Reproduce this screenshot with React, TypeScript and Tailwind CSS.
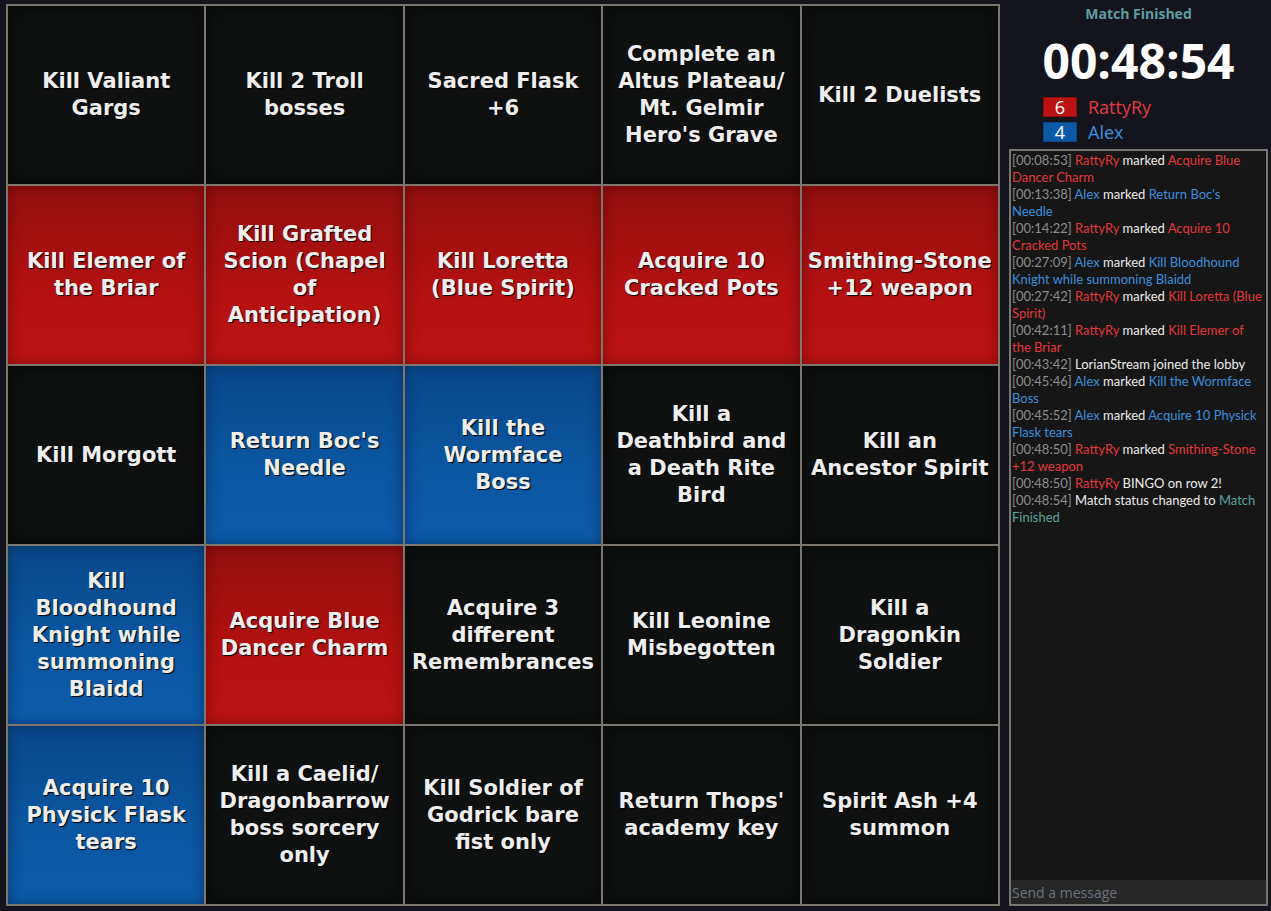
import React from "react";

type Color = "black" | "red" | "blue";
type Cell = { c: Color; t: string[] };

const cells: Cell[] = [
  { c: "black", t: ["Kill Valiant", "Gargs"] },
  { c: "black", t: ["Kill 2 Troll", "bosses"] },
  { c: "black", t: ["Sacred Flask", "+6"] },
  { c: "black", t: ["Complete an", "Altus Plateau/", "Mt. Gelmir", "Hero's Grave"] },
  { c: "black", t: ["Kill 2 Duelists"] },
  { c: "red", t: ["Kill Elemer of", "the Briar"] },
  { c: "red", t: ["Kill Grafted", "Scion (Chapel", "of", "Anticipation)"] },
  { c: "red", t: ["Kill Loretta", "(Blue Spirit)"] },
  { c: "red", t: ["Acquire 10", "Cracked Pots"] },
  { c: "red", t: ["Smithing-Stone", "+12 weapon"] },
  { c: "black", t: ["Kill Morgott"] },
  { c: "blue", t: ["Return Boc's", "Needle"] },
  { c: "blue", t: ["Kill the", "Wormface", "Boss"] },
  { c: "black", t: ["Kill a", "Deathbird and", "a Death Rite", "Bird"] },
  { c: "black", t: ["Kill an", "Ancestor Spirit"] },
  { c: "blue", t: ["Kill", "Bloodhound", "Knight while", "summoning", "Blaidd"] },
  { c: "red", t: ["Acquire Blue", "Dancer Charm"] },
  { c: "black", t: ["Acquire 3", "different", "Remembrances"] },
  { c: "black", t: ["Kill Leonine", "Misbegotten"] },
  { c: "black", t: ["Kill a", "Dragonkin", "Soldier"] },
  { c: "blue", t: ["Acquire 10", "Physick Flask", "tears"] },
  { c: "black", t: ["Kill a Caelid/", "Dragonbarrow", "boss sorcery", "only"] },
  { c: "black", t: ["Kill Soldier of", "Godrick bare", "fist only"] },
  { c: "black", t: ["Return Thops'", "academy key"] },
  { c: "black", t: ["Spirit Ash +4", "summon"] },
];

const bgClass: Record<Color, string> = {
  black:
    "bg-[#0f1111] shadow-[inset_0_0_18px_rgba(0,0,0,0.6)]",
  red:
    "bg-[linear-gradient(to_bottom,#930e0e,#b41111_60%,#bb1313)] shadow-[inset_0_0_14px_rgba(60,0,0,0.45)]",
  blue:
    "bg-[linear-gradient(to_bottom,#09488a,#0b56a2_60%,#0c5bab)] shadow-[inset_0_0_14px_rgba(0,20,50,0.45)]",
};

type Seg = [string, string];
const G = "text-[#8d8d8d]";
const W = "text-[#ececec]";
const R = "text-[#e3373b]";
const B = "text-[#3b8fde]";
const T = "text-[#5aa39b]";

const chat: Seg[][] = [
  [["[00:08:53] ", G], ["RattyRy", R], [" marked ", W], ["Acquire Blue", R]],
  [["Dancer Charm", R]],
  [["[00:13:38] ", G], ["Alex", B], [" marked ", W], ["Return Boc's", B]],
  [["Needle", B]],
  [["[00:14:22] ", G], ["RattyRy", R], [" marked ", W], ["Acquire 10", R]],
  [["Cracked Pots", R]],
  [["[00:27:09] ", G], ["Alex", B], [" marked ", W], ["Kill Bloodhound", B]],
  [["Knight while summoning Blaidd", B]],
  [["[00:27:42] ", G], ["RattyRy", R], [" marked ", W], ["Kill Loretta (Blue", R]],
  [["Spirit)", R]],
  [["[00:42:11] ", G], ["RattyRy", R], [" marked ", W], ["Kill Elemer of", R]],
  [["the Briar", R]],
  [["[00:43:42] ", G], ["LorianStream joined the lobby", W]],
  [["[00:45:46] ", G], ["Alex", B], [" marked ", W], ["Kill the Wormface", B]],
  [["Boss", B]],
  [["[00:45:52] ", G], ["Alex", B], [" marked ", W], ["Acquire 10 Physick", B]],
  [["Flask tears", B]],
  [["[00:48:50] ", G], ["RattyRy", R], [" marked ", W], ["Smithing-Stone", R]],
  [["+12 weapon", R]],
  [["[00:48:50] ", G], ["RattyRy", R], [" BINGO on row 2!", W]],
  [["[00:48:54] ", G], ["Match status changed to ", W], ["Match", T]],
  [["Finished", T]],
];

export default function App() {
  return (
    <div className="flex h-[911px] w-[1271px] bg-[#14141d] overflow-hidden">
      <div className="pl-[6px] pt-[4px]">
        <div className="grid h-[902px] w-[994px] grid-cols-5 grid-rows-5 gap-[2px] bg-[#7c766c] p-[2px]">
          {cells.map((cell, i) => (
            <div
              key={i}
              className={`flex items-center justify-center text-center ${bgClass[cell.c]}`}
            >
              <div className="whitespace-nowrap font-['DejaVu_Sans',sans-serif] text-[21px] font-bold leading-[27px] text-[#eeeeee] [text-shadow:1px_1px_1px_#000]">
                {cell.t.map((line, j) => (
                  <div key={j}>{line}</div>
                ))}
              </div>
            </div>
          ))}
        </div>
      </div>
      <div className="ml-[9px] flex w-[259px] flex-col pb-[5px] font-['Open_Sans',sans-serif]">
        <div className="pt-[4px] text-center text-[14px] font-bold leading-[20px] text-[#5f9ea0]">
          Match Finished
        </div>
        <div className="mt-[9px] text-center text-[48px] font-bold leading-[56px] text-white">
          00:48:54
        </div>
        <div className="mt-[8px] flex flex-col gap-[5px] pl-[34px]">
          <div className="flex h-[20px] items-center">
            <div className="flex h-[20px] w-[34px] items-center justify-center border border-[#8d0d0d] bg-[#bb1313] text-[18px] leading-none text-white">
              6
            </div>
            <div className="ml-[11px] text-[18px] leading-none text-[#e63a3e]">RattyRy</div>
          </div>
          <div className="flex h-[20px] items-center">
            <div className="flex h-[20px] w-[34px] items-center justify-center border border-[#0a4784] bg-[#0b5aa8] text-[18px] leading-none text-white">
              4
            </div>
            <div className="ml-[11px] text-[18px] leading-none text-[#3b8fe2]">Alex</div>
          </div>
        </div>
        <div className="mt-[7px] flex min-h-0 flex-1 flex-col border-2 border-[#78746e] bg-[#161616]">
          <div className="flex-1 overflow-hidden pl-[1px] pt-[1px] font-['Lato',sans-serif] text-[13px] leading-[17px]">
            {chat.map((line, i) => (
              <div key={i} className="whitespace-nowrap">
                {line.map(([txt, cls], j) => (
                  <span key={j} className={cls}>
                    {txt}
                  </span>
                ))}
              </div>
            ))}
          </div>
          <div className="flex h-[24px] items-center bg-[#262626] pl-[1px] text-[14px] text-[#6b7480]">
            Send a message
          </div>
        </div>
      </div>
    </div>
  );
}
